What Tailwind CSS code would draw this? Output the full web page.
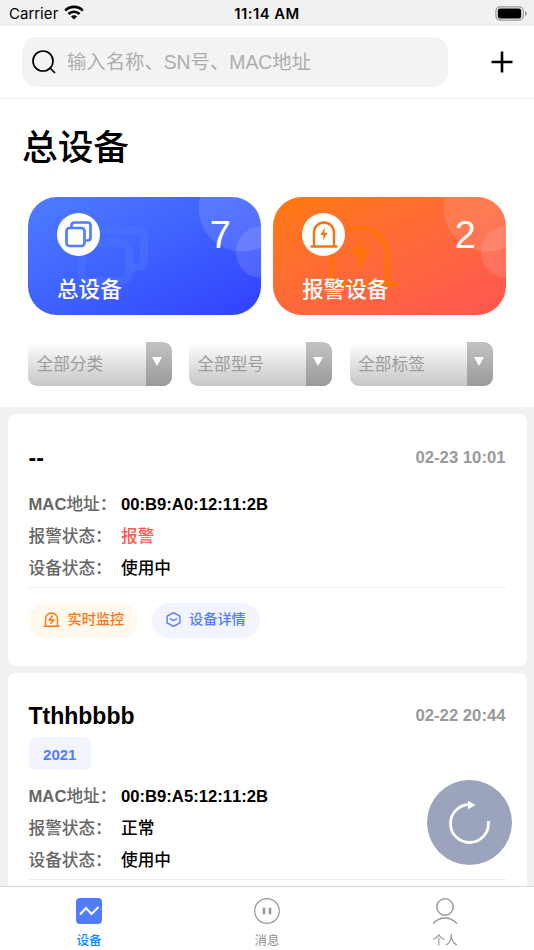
<!DOCTYPE html>
<html lang="zh-CN">
<head>
<meta charset="utf-8">
<title>设备</title>
<script src="https://cdn.jsdelivr.net/npm/@tailwindcss/browser@4"></script>
</head>
<body class="w-[534px] h-[950px] overflow-hidden bg-[#f1f1f1] text-black font-['Liberation_Sans','Noto_Sans_CJK_SC',sans-serif] [font-kerning:none]">
<div class="relative flex h-[950px] flex-col overflow-hidden">

  <!-- Status bar -->
  <div class="grid h-[26px] shrink-0 grid-cols-3 items-center bg-[#f1f1f1] pt-[2px] font-['Inter',sans-serif] text-[15px] leading-6">
    <div class="flex items-center gap-[6px] pl-[9px]">
      <span class="tracking-[0.1px]">Carrier</span>
      <svg class="mt-[-3px] h-[15px] w-[20px]" viewBox="0 0 20 15" fill="none" stroke="#000" stroke-width="2.7"><path d="M1.200 5.600a12.400 12.400 0 0 1 17.600 0M4.500 9a7.800 7.800 0 0 1 11 0"/><path d="M10 14.600l-3.100-3.100a4.400 4.400 0 0 1 6.200 0z" fill="#000" stroke="none"/></svg>
    </div>
    <div class="text-center font-semibold whitespace-nowrap text-[14.800px] tracking-[0.5px]">11:14 AM</div>
    <svg class="ml-auto mr-[6px] mt-[-2px] h-[15px] w-[33px]" viewBox="0 0 33 15"><rect x=".9" y=".9" width="27.4" height="13.2" rx="4" fill="none" stroke="#999" stroke-width="1.2"/><rect x="2.8" y="2.6" width="23.4" height="9.8" rx="2.2"/><path d="M30 5v5q2-1 2-2.500t-2-2.500" fill="#999"/></svg>
  </div>

  <!-- Search header -->
  <div class="flex h-[73px] shrink-0 items-center border-b border-[#ededed] bg-white pl-[22px] pr-[21px]">
    <div class="flex h-[50px] w-[426px] items-center gap-[11px] rounded-[15px] bg-[#f3f3f3] pl-[10px]">
      <svg class="h-6 w-6" viewBox="0 0 24 24" fill="none" stroke="#000" stroke-width="1.7"><circle cx="11" cy="11" r="10"/><path d="M17.500 17.500L23 23"/></svg>
      <span class="text-[19.350px] leading-6 text-[#adadad]">输入名称、SN号、MAC地址</span>
    </div>
    <svg class="ml-auto h-[22px] w-[22px]" viewBox="0 0 22 22" stroke="#000" stroke-width="2.600"><path d="M11 .5v21M.5 11h21"/></svg>
  </div>

  <!-- Overview -->
  <div class="h-[308px] shrink-0 bg-white px-7">
    <h1 class="-ml-[6px] pt-[25px] text-[35.700px] font-medium leading-[48px]">总设备</h1>
    <div class="mt-[25px] flex gap-3">
      <div class="relative h-[118px] w-[233px] overflow-hidden rounded-[29px] bg-linear-to-br from-[#4f7cff] to-[#333eff] text-white">
        <svg class="absolute inset-0 h-[118px] w-[233px]" viewBox="0 0 233 118" fill="none">
          <circle cx="214" cy="11" r="43.500" fill="#fff" fill-opacity=".13"/><circle cx="234" cy="55" r="26" fill="#fff" fill-opacity=".13"/>
          <g stroke="#4b72ff" stroke-opacity=".55" stroke-width="8"><rect x="53.500" y="46" width="47.500" height="38" rx="8"/><path d="M66 33h43q7 0 7 7v23q0 7-7 7h-6"/></g>
        </svg>
        <div class="relative flex h-full flex-col justify-between pt-4 pb-[9px] pl-[29px] pr-[30px]">
          <div class="flex justify-between">
            <div class="flex h-[43px] w-[43px] items-center justify-center rounded-full bg-white">
              <svg class="h-[27px] w-[27px]" viewBox="0 0 27 27" fill="none" stroke="#517dff" stroke-width="2.700"><path d="M6.500 6V4.500q0-3 3-3h13q3 0 3 3v12q0 3-3 3h-2"/><rect x="1.500" y="7" width="18" height="18" rx="3"/></svg>
            </div>
            <span class="text-[38px] leading-[45px]">7</span>
          </div>
          <span class="text-[21.600px] font-medium leading-8">总设备</span>
        </div>
      </div>
      <div class="relative h-[118px] w-[233px] overflow-hidden rounded-[29px] bg-linear-to-br from-[#ff7a05] to-[#ff5550] text-white">
        <svg class="absolute inset-0 h-[118px] w-[233px]" viewBox="0 0 233 118" fill="none">
          <circle cx="214" cy="11" r="43.500" fill="#fff" fill-opacity=".12"/><circle cx="234" cy="55" r="26" fill="#fff" fill-opacity=".12"/>
          <path d="M50 87h73M59 87V57a27 25.500 0 0 1 55 0v30" stroke="#ff720a" stroke-width="4.500" stroke-linecap="round"/>
          <path d="M91 39L76 57.500h9L83 74l15-21h-9z" fill="#ff720a"/>
        </svg>
        <div class="relative flex h-full flex-col justify-between pt-4 pb-[9px] pl-[29px] pr-[30px]">
          <div class="flex justify-between">
            <div class="flex h-[43px] w-[43px] items-center justify-center rounded-full bg-white">
              <svg class="h-[27px] w-[28px]" viewBox="0 0 28 27" fill="none" stroke="#f4740e" stroke-width="2.400" stroke-linecap="round"><path d="M1.500 25.500h25M4 25V11.500a10 10 0 0 1 20 0V25"/><path d="M14.800 6.500l-4.300 7.500h3l-.6 5.500 4.500-7.500h-3z" fill="#f4740e" stroke="none"/></svg>
            </div>
            <span class="text-[38px] leading-[45px]">2</span>
          </div>
          <span class="text-[21.600px] font-medium leading-8">报警设备</span>
        </div>
      </div>
    </div>
    <div class="mt-[27px] flex gap-[17.300px] text-[16.700px] text-[#9c9c9c]">
      <div class="flex h-11 w-[143.500px] overflow-hidden rounded-[9px] bg-linear-to-b from-white to-[#c6c6c6]">
        <span class="flex-1 pl-[8.500px] leading-[46px]">全部分类</span>
        <div class="flex w-[26px] justify-center bg-linear-to-b from-[#c3c3c3] to-[#9a9a9a] pt-[15px]"><svg class="mr-[3px] h-[9px] w-[10px]" viewBox="0 0 10 9"><path d="M0 0h10L5 9z" fill="#fff"/></svg></div>
      </div>
      <div class="flex h-11 w-[143.500px] overflow-hidden rounded-[9px] bg-linear-to-b from-white to-[#c6c6c6]">
        <span class="flex-1 pl-[8.500px] leading-[46px]">全部型号</span>
        <div class="flex w-[26px] justify-center bg-linear-to-b from-[#c3c3c3] to-[#9a9a9a] pt-[15px]"><svg class="mr-[3px] h-[9px] w-[10px]" viewBox="0 0 10 9"><path d="M0 0h10L5 9z" fill="#fff"/></svg></div>
      </div>
      <div class="flex h-11 w-[143.500px] overflow-hidden rounded-[9px] bg-linear-to-b from-white to-[#c6c6c6]">
        <span class="flex-1 pl-[8.500px] leading-[46px]">全部标签</span>
        <div class="flex w-[26px] justify-center bg-linear-to-b from-[#c3c3c3] to-[#9a9a9a] pt-[15px]"><svg class="mr-[3px] h-[9px] w-[10px]" viewBox="0 0 10 9"><path d="M0 0h10L5 9z" fill="#fff"/></svg></div>
      </div>
    </div>
  </div>

  <!-- Device list -->
  <div class="flex min-h-0 flex-1 flex-col gap-[7px] overflow-hidden px-[7.500px] pt-[7px]">
    <div class="h-[252px] shrink-0 rounded-[8px] bg-white px-[21px] pt-[28px]">
      <div class="flex items-center justify-between font-bold leading-[30px]">
        <span class="text-[23px]">--</span>
        <span class="text-[16.700px] leading-[32px] text-[#999]">02-23 10:01</span>
      </div>
      <div class="mt-[15px] grid grid-cols-[92.500px_1fr] text-[16.650px] font-medium leading-8">
        <span class="text-[#666] whitespace-nowrap"><b>MAC</b>地址：</span><span class="font-bold">00:B9:A0:12:11:2B</span>
        <span class="text-[#666] whitespace-nowrap">报警状态：</span><span class="text-[#ff5a4f]">报警</span>
        <span class="text-[#666] whitespace-nowrap">设备状态：</span><span>使用中</span>
      </div>
      <div class="mt-[2px] flex gap-[14px] border-t border-[#eee] pt-[14.500px] text-[14.200px] font-medium">
        <div class="flex h-[35px] w-[109.500px] items-center gap-[8px] rounded-full bg-[#fff9ee] pl-[14px] text-[#ff740d]">
          <svg class="-mt-[2px] h-[15px] w-[17px]" viewBox="0 0 17 15" fill="none" stroke="currentColor" stroke-width="1.400"><path d="M.5 14.300h16M2.500 14V7a6 6 0 0 1 12 0v7"/><path d="M9.800 3.500L6.400 7.900h4.400L7.300 12" stroke-width="1.500"/></svg>
          <span>实时监控</span>
        </div>
        <div class="flex h-[35px] w-[108px] items-center gap-[8px] rounded-full bg-[#f2f5ff] pl-[14px] text-[#527cfe]">
          <svg class="-mt-[2px] h-[15px] w-[15px]" viewBox="0 0 15 15" fill="none" stroke="currentColor" stroke-width="1.400" stroke-linejoin="round"><path d="M7.500.7l6.400 3.400v6.800l-6.400 3.400-6.400-3.400V4.100z"/><path d="M3.800 6.500l3.700 2.100 3.700-2.100"/></svg>
          <span>设备详情</span>
        </div>
      </div>
    </div>

    <div class="h-[252px] shrink-0 rounded-[8px] bg-white px-[21px] pt-[27px]">
      <div class="flex items-center justify-between font-bold leading-[30px]">
        <span class="text-[23px]">Tthhbbbb</span>
        <span class="text-[16.700px] leading-[32px] text-[#999]">02-22 20:44</span>
      </div>
      <div class="mt-[5px] h-[33px] w-[62.500px] rounded-[7px] bg-[#f2f5ff] text-center text-[15px] font-bold leading-[35px] text-[#527cfe]">2021</div>
      <div class="mt-[11px] grid grid-cols-[92.500px_1fr] text-[16.650px] font-medium leading-8">
        <span class="text-[#666] whitespace-nowrap"><b>MAC</b>地址：</span><span class="font-bold">00:B9:A5:12:11:2B</span>
        <span class="text-[#666] whitespace-nowrap">报警状态：</span><span>正常</span>
        <span class="text-[#666] whitespace-nowrap">设备状态：</span><span>使用中</span>
      </div>
      <div class="mt-[2px] border-t border-[#eee]"></div>
    </div>
  </div>

  <!-- Tab bar -->
  <div class="grid h-[64px] shrink-0 grid-cols-3 border-t border-[#d5d5d5] bg-white text-[12.500px] leading-[18px] text-[#8f8f8f]">
    <div class="flex flex-col items-center gap-[8px] pt-[11px] font-medium text-[#1684fc]">
      <svg class="h-[26px] w-[26px]" viewBox="0 0 26 26"><rect width="26" height="26" rx="4" fill="#527cfe"/><path d="M4 16.500l6-6.500 5.500 6L22.500 9" fill="none" stroke="#fff" stroke-width="2"/></svg>
      <span>设备</span>
    </div>
    <div class="flex flex-col items-center gap-[8px] pt-[11px]">
      <svg class="h-[26px] w-[26px]" viewBox="0 0 26 26" fill="none" stroke="#999"><circle cx="13" cy="13" r="12.300" stroke-width="1.300"/><path d="M10 9.800v6.400M16 9.800v6.400" stroke-width="2.600"/></svg>
      <span>消息</span>
    </div>
    <div class="flex flex-col items-center gap-[8px] pt-[11px]">
      <svg class="h-[26px] w-[26px]" viewBox="0 0 26 26" fill="none" stroke="#999" stroke-width="1.500"><circle cx="13" cy="9" r="8.200"/><path d="M1 25.500c7-7.300 17-7.300 24 0"/></svg>
      <span>个人</span>
    </div>
  </div>

  <!-- Floating refresh -->
  <div class="absolute left-[427px] top-[780px] h-[85px] w-[85px] rounded-full bg-[#9ca3bd]">
    <svg class="h-[85px] w-[85px]" viewBox="0 0 85 85" fill="none" stroke="#fff" stroke-width="2.800"><path d="M61.500 41v2a19 19 0 1 1-19-18.500"/><path d="M41 20.700l7.700 4.300-7.700 4.300z" fill="#fff" stroke="none"/></svg>
  </div>
</div>
</body>
</html>
